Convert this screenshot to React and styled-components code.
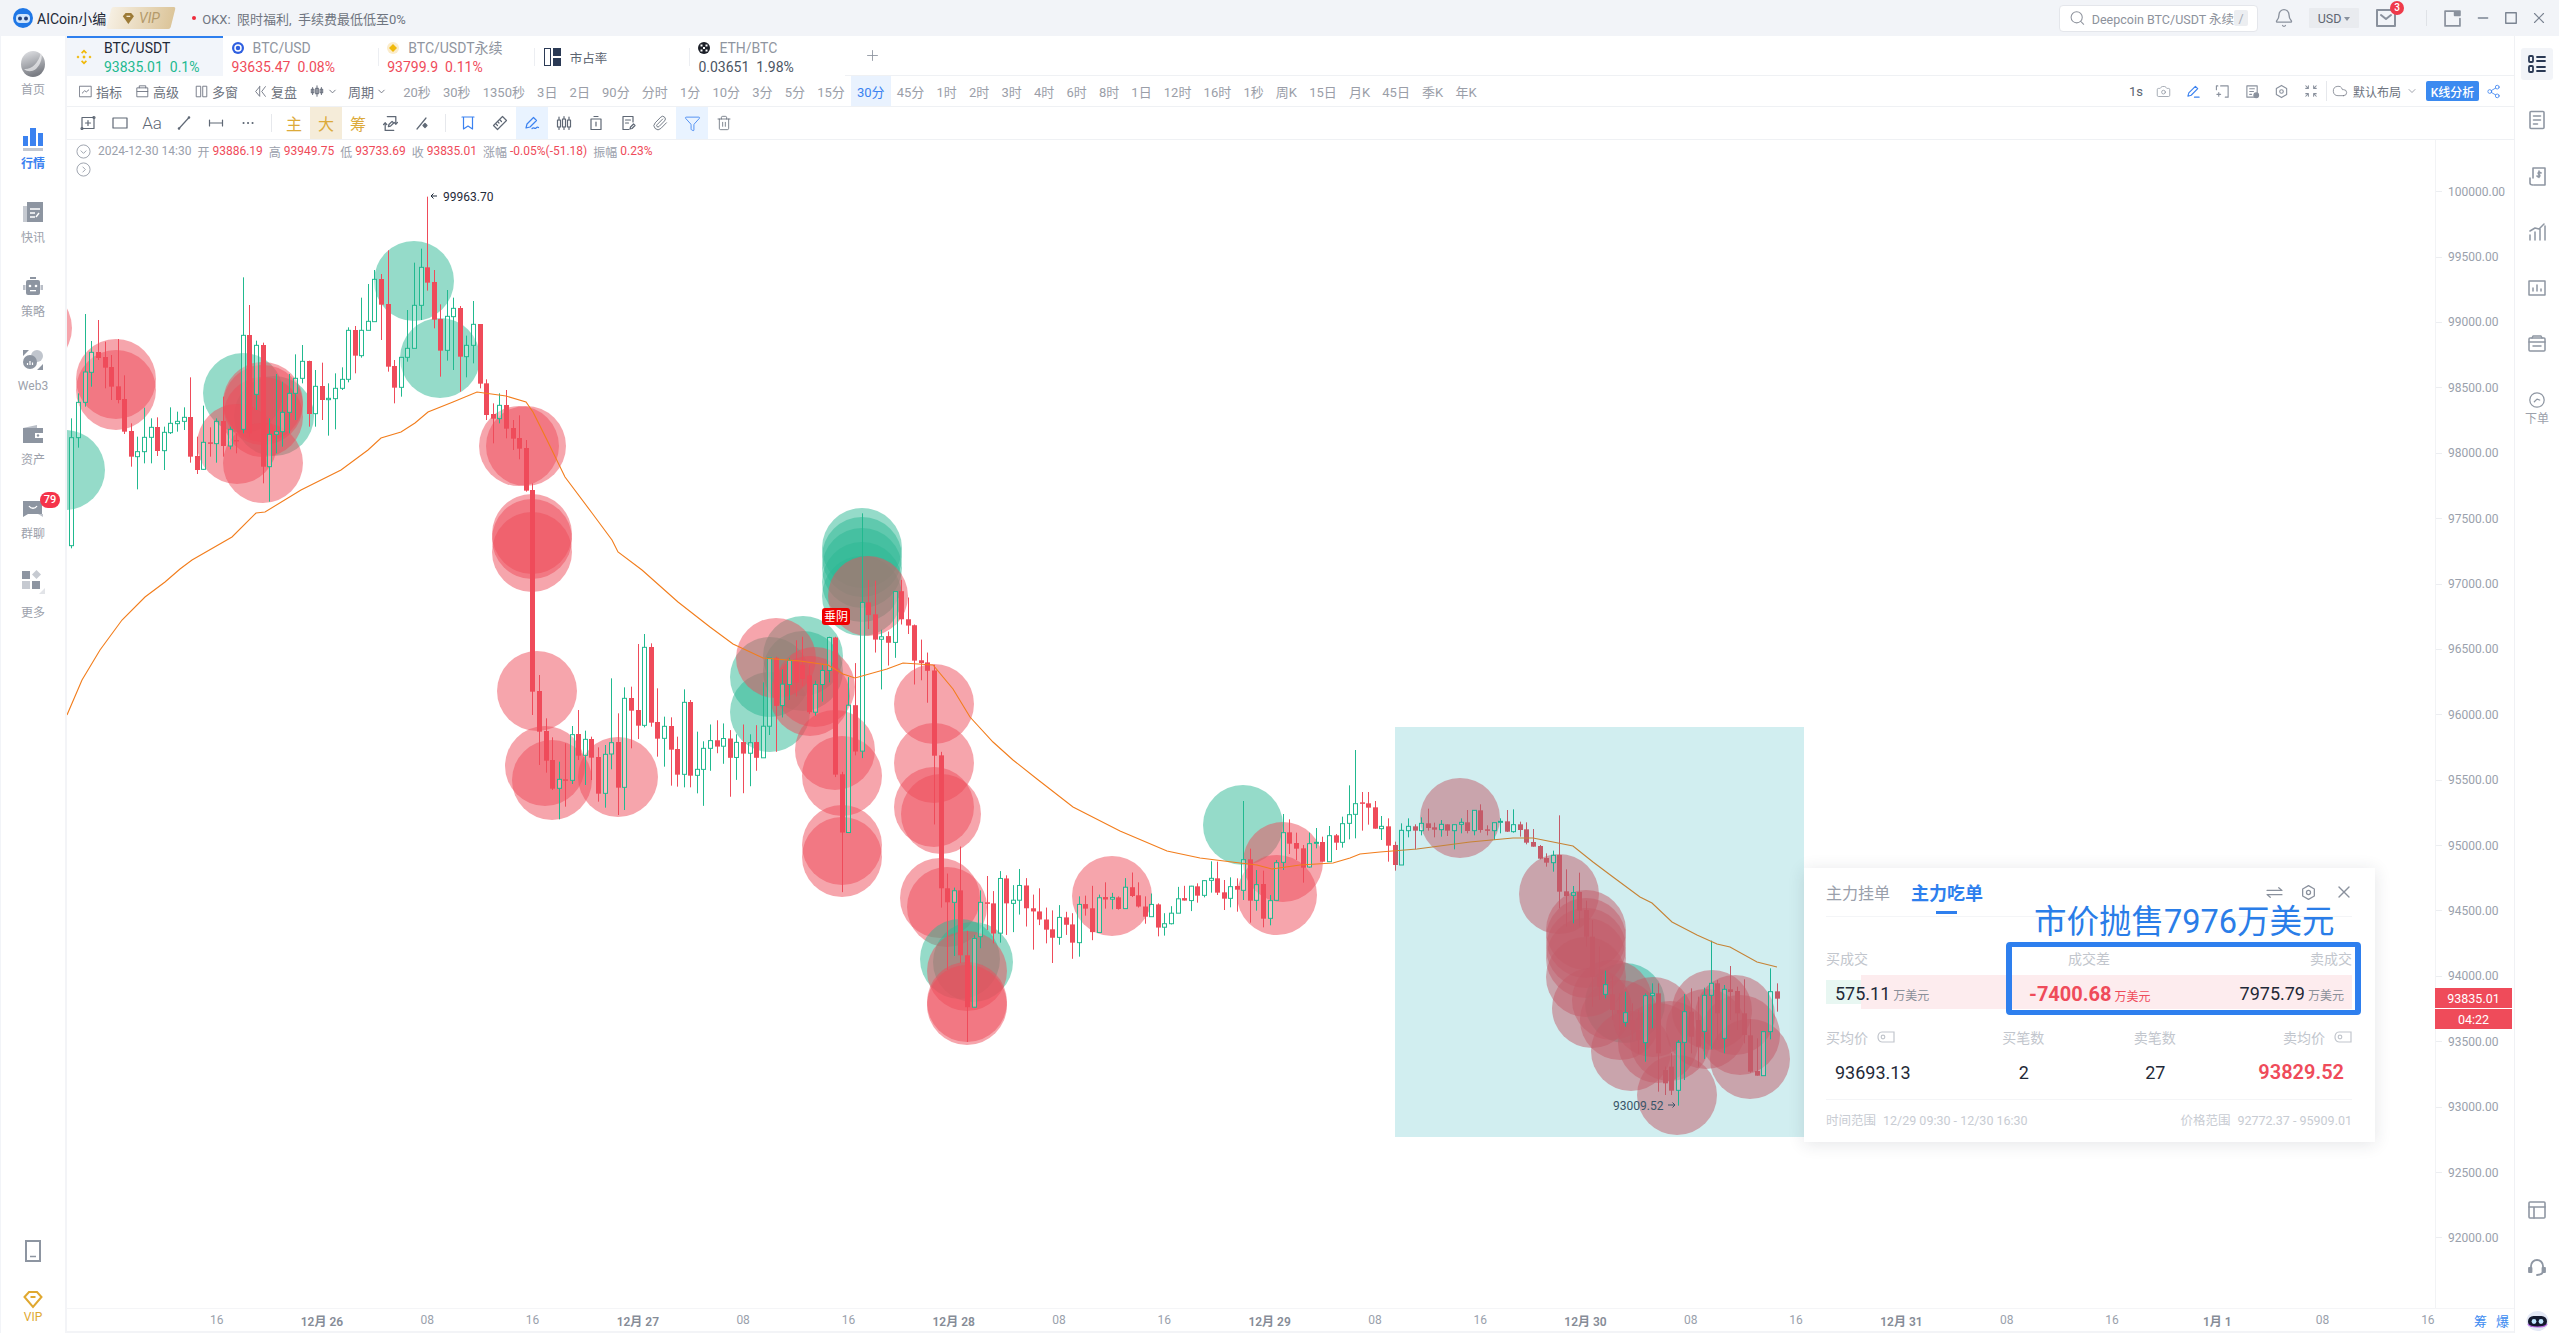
import React from 'react'
import styled, { createGlobalStyle } from 'styled-components'
import { Search, Bell, ChevronDown, Camera, Paperclip, Trash2, Filter, Share2, Plus, X, Minus, Cloud } from 'lucide-react'

const RED = '#ef4b5a'
const GREEN = '#21b98f'
const BLUE = '#2e7fee'

const GlobalStyle = createGlobalStyle`
  html, body { margin: 0; padding: 0; background: #fff; overflow: hidden; }
  body { font-family: Roboto, "Noto Sans CJK SC", sans-serif; color: #1f2937; }
  * { box-sizing: border-box; }
`

/* ---------- chart data, transcribed per screen region ---------- */
const seg = (ox, oy, sx, sy, rows) => rows.map(([x, up, wt, bt, bb, wb]) => ({
  x: Math.round(ox + x / sx), up, wt: oy + wt / sy, bt: oy + bt / sy, bb: oy + bb / sy, wb: oy + wb / sy,
}))

const candles = [
  ...seg(60, 170, 2.24, 3, [
    [25,1,745,803,1127,1135],[41,1,670,697,803,833],[55,1,432,606,697,710],[70,1,513,547,607,650],[85,0,450,546,564,570],
    [100,0,515,561,593,655],[115,0,555,591,650,690],[129,0,507,649,690,700],[144,0,616,687,785,792],[159,0,760,783,860,890],
    [173,1,800,845,860,958],[189,1,713,802,845,880],[203,1,745,772,802,880],[218,0,742,771,843,858],[232,1,770,787,842,900],
    [247,1,712,760,788,792],[262,1,725,754,761,785],[277,1,712,742,754,780],[292,0,622,741,860,878],[306,0,800,858,900,912],
    [321,1,707,817,898,900],[336,0,772,817,821,860],[350,1,745,754,821,878],[365,0,680,753,828,860],[380,1,770,778,828,838],
    [394,0,790,810,814,850],[409,1,322,496,778,790],[424,0,405,495,790,800],[439,1,512,526,673,720],[454,0,518,525,890,940],
    [469,1,745,793,890,995],[483,1,612,785,793,850],[498,1,635,727,785,830],[513,1,612,670,727,790],[527,1,553,625,670,750],
    [542,1,525,574,625,640],[557,0,572,573,732,770],[572,1,600,649,731,770],[587,0,578,648,690,750],[601,1,640,685,689,797],
    [616,1,610,655,686,778],[631,1,592,628,655,660],[646,1,472,481,628,637],[660,0,468,480,557,610],[675,1,383,481,557,563],
    [690,1,342,454,481,481],[704,1,300,328,455,455],[719,0,312,327,404,510],[734,0,241,402,590,605],[749,0,570,588,653,700],
    [764,1,562,562,652,680],[778,1,420,535,562,575],[793,1,278,406,535,535],[808,1,236,292,406,450],[823,0,80,292,338,362],
    [837,0,300,336,449,475],[852,0,403,447,542,620],[866,1,360,439,541,572],[881,1,383,415,440,600],[896,0,408,414,560,665],
    [910,1,497,526,560,622],[926,1,393,463,526,580],[940,0,462,462,641,655],[955,0,628,640,735,750],[970,0,700,732,746,820],
    [984,1,670,706,746,760],[999,0,660,705,776,805],[1014,0,750,774,806,840],[1029,0,736,804,836,868],[1043,0,810,834,962,965],
  ]),
  ...seg(525, 440, 3, 3, [
    [22,0,130,150,755,825],[42,0,705,753,875,975],[62,0,835,873,962,998],[82,0,892,960,1046,1050],[101,1,965,1018,1045,1138],
    [121,0,910,1018,1022,1100],[141,1,858,884,1021,1032],[160,0,810,882,947,960],[180,1,872,898,946,1035],[199,0,890,897,953,1020],
    [219,0,922,951,1061,1085],[239,1,915,943,1060,1103],[259,1,715,908,942,988],[279,0,820,906,1043,1125],[298,1,742,775,1042,1110],
    [318,0,740,774,812,925],[338,0,612,810,857,897],[358,1,582,622,856,862],[378,0,610,621,848,860],[397,0,745,846,896,950],
    [417,1,830,859,895,980],[437,0,832,858,929,1037],[457,0,890,927,1004,1040],[476,1,748,787,1003,1042],[496,0,780,786,1007,1042],
    [516,1,875,988,1006,1060],
  ]),
  ...seg(700, 500, 3, 2.851, [
    [10,1,688,708,768,872],[30,1,640,686,708,772],[50,0,628,685,703,722],[70,1,637,680,702,752],[90,0,656,680,735,846],
    [109,1,668,691,734,798],[129,0,640,690,723,836],[149,1,668,692,722,816],[169,0,642,690,735,772],[188,1,520,645,735,735],
    [208,1,450,450,645,670],[228,0,447,450,587,718],[247,1,483,525,586,620],[267,1,450,457,526,570],[287,0,400,460,520,560],
    [307,0,390,470,510,530],[327,0,470,500,605,610],[346,1,515,526,605,615],[366,1,470,486,526,575],[386,1,390,392,486,520],
    [406,0,390,392,783,790],[425,0,775,782,948,1118],[445,1,505,585,948,948],[465,0,465,585,717,728],[485,1,38,292,716,736],
    [505,0,228,292,328,368],[524,0,230,326,398,435],[544,1,370,390,397,540],[564,0,375,388,407,472],[584,1,260,261,406,450],
    [604,0,228,260,340,355],[623,0,278,340,358,382],[643,0,355,357,458,526],[662,0,398,457,465,514],[682,0,435,463,487,578],
    [702,0,470,486,729,925],[722,0,718,728,1107,1162],[742,0,1065,1107,1147,1340],[761,1,1105,1114,1147,1300],[781,0,988,1113,1298,1320],
    [801,0,1228,1298,1446,1545],[821,1,1240,1250,1446,1446],[841,1,1113,1147,1245,1278],[860,0,1072,1147,1151,1226],[880,0,1115,1150,1236,1264],
    [899,1,1058,1079,1235,1262],[919,0,1070,1079,1150,1240],[939,1,1098,1141,1150,1232],[958,1,1052,1099,1141,1182],[978,0,1078,1099,1164,1216],
    [998,0,1125,1164,1173,1282],[1018,0,1107,1173,1196,1212],[1038,0,1162,1196,1225,1264],[1057,0,1170,1224,1248,1320],[1077,1,1155,1190,1247,1268],
    [1097,0,1174,1190,1211,1240],[1117,0,1178,1210,1262,1308],[1136,1,1130,1153,1262,1302],[1156,0,1128,1152,1165,1185],[1176,0,1100,1164,1232,1255],
    [1196,1,1125,1134,1233,1233],[1215,0,1090,1132,1139,1165],[1235,1,1120,1133,1138,1167],[1255,0,1130,1133,1166,1168],[1275,1,1078,1104,1165,1165],
    [1295,0,1062,1104,1129,1132],[1314,0,1090,1127,1159,1162],[1334,0,1130,1159,1188,1208],[1354,1,1122,1153,1188,1188],[1374,0,1150,1153,1219,1244],
    [1393,1,1178,1208,1218,1242],[1413,1,1158,1178,1208,1210],[1433,1,1103,1137,1178,1178],[1452,0,1100,1135,1142,1142],[1472,1,1100,1101,1142,1172],
  ]),
  ...seg(1190, 740, 3, 3, [
    [22,0,430,439,467,488],[42,1,420,422,466,472],[62,1,364,415,421,458],[81,0,365,415,458,465],[101,0,420,457,476,510],
    [121,1,412,440,475,502],[140,0,415,438,449,515],[160,1,183,359,451,480],[180,0,326,358,482,548],[199,1,390,434,481,512],
    [219,0,392,432,536,562],[239,1,465,482,535,556],[259,1,360,368,481,481],[278,1,222,278,367,390],[298,0,238,277,311,342],
    [318,0,278,309,326,360],[338,0,315,325,383,428],[358,1,278,311,381,383],[377,1,264,307,310,325],[397,0,290,306,365,365],
    [417,1,258,287,365,365],[437,0,282,286,308,330],[457,1,230,251,307,323],[476,1,136,224,250,298],[496,1,30,191,223,295],
    [516,0,156,187,190,272],[535,0,156,190,203,254],[555,0,183,202,266,266],
  ]),
  ...seg(1380, 720, 3, 3, [
    [4,1,288,319,326,360],[25,0,295,319,377,425],[45,0,365,375,435,452],[64,1,310,331,435,435],[84,1,295,319,332,352],
    [104,0,313,319,332,388],[123,1,292,310,332,346],[143,0,266,310,324,332],[163,0,308,322,329,352],[182,1,300,313,329,350],
    [202,0,313,313,332,348],[222,1,313,314,332,388],[242,1,295,307,313,340],[262,0,270,307,333,340],[281,1,270,271,332,346],
    [301,0,253,271,330,338],[321,0,316,328,332,346],[341,1,308,308,332,360],[360,1,295,304,307,340],[380,0,270,304,335,336],
    [400,1,268,314,335,338],[420,0,305,313,330,350],[439,0,307,328,368,373],[459,0,327,366,380,380],[479,0,375,378,416,418],
    [498,0,400,414,428,440],[518,1,392,406,428,455],[538,0,286,405,515,565],[558,0,448,514,528,620],[578,1,498,518,526,610],
    [598,0,458,516,572,620],[617,0,542,570,650,680],[637,0,600,650,770,860],[657,0,680,770,800,840],[676,1,752,794,823,835],
    [696,0,770,823,870,900],[716,0,820,870,880,930],[736,1,815,878,907,920],[756,0,850,900,930,960],[775,0,870,930,960,1000],
    [795,1,820,827,968,1025],[815,1,790,820,827,925],[835,0,790,820,1000,1115],[854,0,1040,1050,1090,1125],[874,0,1000,1040,1112,1125],
    [893,1,960,967,1111,1157],[913,1,822,875,967,1080],[933,0,805,875,950,1000],[953,0,830,900,980,1040],[973,1,803,826,934,1017],
    [992,1,662,790,826,988],[1012,0,780,790,880,960],[1032,1,795,808,955,1000],[1051,0,738,808,816,900],[1071,0,800,813,880,930],
    [1091,0,778,880,945,970],[1111,0,898,946,1055,1058],[1130,0,955,1053,1067,1067],[1150,1,935,935,1067,1067],[1170,1,745,815,935,958],
    [1190,0,790,814,836,875],
  ]),
]

// [cx, cy, buy?]
const bubbles = [
  [32,328,0],[65,470,1],[116,379,0],[116,390,0],[243,393,1],[274,416,1],[263,402,0],[263,405,0],[263,417,0],[237,444,0],[263,463,0],
  [414,281,1],[440,358,1],[519,446,0],[526,446,0],[532,534,0],[532,539,0],[532,552,0],[537,691,0],[545,766,0],[552,780,0],[618,777,0],
  [862,548,1],[862,557,1],[862,568,1],[862,582,1],[862,596,1],[868,596,0],
  [770,677,1],[770,712,1],[803,656,1],[803,671,1],[776,658,0],[815,687,0],[810,696,0],[835,750,0],[842,776,0],[842,845,0],[842,857,0],
  [934,704,0],[934,763,0],[934,807,0],[941,814,0],[940,898,0],[947,907,0],
  [960,959,1],[973,962,1],[967,971,0],[967,1002,0],[967,1005,0],[1112,896,0],
  [1243,825,1],[1283,862,0],[1277,895,0],
  [1460,818,0],[1559,894,0],[1625,1003,1],[1586,930,0],[1586,938,0],[1586,948,0],[1586,958,0],[1586,977,0],[1592,1008,0],
  [1612,1000,0],[1620,1020,0],[1631,1051,0],[1658,1043,0],[1653,1017,0],[1670,1041,0],[1677,1095,0],
  [1712,1010,0],[1735,1015,0],[1706,1029,0],[1740,1035,0],[1750,1059,0],
]

const maLine = [
  [67,715],[82,680],[100,650],[122,620],[145,597],[165,582],[180,569],[192,560],[232,537],[256,513],[265,512],[301,490],[341,470],[368,450],
  [381,438],[401,432],[415,423],[428,412],[453,402],[477,392],[506,396],[526,402],[533,412],[547,440],[565,477],[592,513],[612,540],[618,552],
  [642,570],[678,602],[710,627],[733,644],[763,658],[800,661],[828,665],[843,674],[855,678],[887,669],[903,663],[933,665],[953,689],[970,717],
  [993,742],[1013,760],[1037,779],[1073,807],[1120,831],[1167,851],[1200,858],[1240,863],[1257,865],[1272,869],[1300,865],[1333,863],[1350,858],
  [1360,854],[1380,852],[1417,849],[1470,842],[1513,838],[1533,838],[1573,846],[1593,862],[1613,877],[1640,897],[1652,903],[1672,922],[1697,935],
  [1717,944],[1730,947],[1757,962],[1777,967],
]

const priceTicks = Array.from({ length: 17 }, (_, i) => (100000 - i * 500).toFixed(2))
const timeTicks = ['16','12月 26','08','16','12月 27','08','16','12月 28','08','16','12月 29','08','16','12月 30','08','16','12月 31','08','16','1月 1','08','16']
const periods = ['20秒','30秒','1350秒','3日','2日','90分','分时','1分','10分','3分','5分','15分','30分','45分','1时','2时','3时','4时','6时','8时','1日','12时','16时','1秒','周K','15日','月K','45日','季K','年K']

/* ---------- page frame ---------- */
const Page = styled.div`
  width: 2559px;
  height: 1333px;
  display: flex;
  flex-direction: column;
  background: #fff;
  font-size: 13px;
`
const Body = styled.div`
  flex: 1;
  min-height: 0;
  display: flex;
`

/* ---------- title bar ---------- */
const TitleBar = styled.header`
  height: 36px;
  flex: none;
  display: flex;
  align-items: center;
  padding-left: 13px;
  background: #f2f4f8;
`
const Brand = styled.span`
  margin-left: 4px;
  font-size: 14px;
  color: #1f2937;
  white-space: nowrap;
`
const VipBadge = styled.span`
  margin-left: 3px;
  width: 64px;
  height: 22px;
  flex: none;
  display: flex;
  align-items: center;
  gap: 4px;
  padding-left: 13px;
  transform: skewX(-14deg);
  background: linear-gradient(90deg, #f6efe2, #dcc59a);
  border-radius: 2px;
  color: #b49a6a;
  font-size: 14px;
  i { transform: skewX(14deg); display: flex; font-style: italic; }
`
const Notice = styled.span`
  margin-left: 19px;
  display: flex;
  align-items: center;
  gap: 6px;
  color: #6f7580;
  font-size: 13px;
  white-space: pre;
  &::before { content: ''; width: 4px; height: 4px; border-radius: 50%; background: #ef2b3c; }
`
const TitleRight = styled.div`
  margin-left: auto;
  display: flex;
  align-items: center;
  color: #8a919d;
`
const SearchBox = styled.div`
  width: 199px;
  height: 27px;
  margin-left: 1px;
  display: flex;
  align-items: center;
  padding: 0 9px 0 9px;
  background: #fff;
  border: 1px solid #e4e6eb;
  border-radius: 4px;
  font-size: 12.5px;
  color: #8d929c;
  white-space: nowrap;
  span { margin-left: 6px; flex: 1; }
  kbd {
    width: 15px;
    height: 16px;
    display: grid;
    place-items: center;
    background: #eceef1;
    border-radius: 2px;
    font: inherit;
    color: #a7acb5;
  }
`
const BellSlot = styled.div`
  margin-left: 16px;
  display: flex;
`
const UsdBox = styled.div`
  width: 50px;
  height: 20px;
  margin-left: 15px;
  display: flex;
  align-items: center;
  justify-content: center;
  gap: 3px;
  background: #e9ebef;
  border-radius: 1px;
  font-size: 12.5px;
  color: #5e6672;
  &::after { content: ''; border: 3.5px solid transparent; border-top: 4px solid #8a919d; margin-top: 4px; }
`
const MailWrap = styled.div`
  position: relative;
  margin-left: 17px;
  display: flex;
`
const MailCount = styled.b`
  position: absolute;
  top: -7px;
  right: -8px;
  width: 14px;
  height: 14px;
  border-radius: 50%;
  background: #ef3a4a;
  color: #fff;
  font-size: 10px;
  font-weight: 500;
  line-height: 14px;
  text-align: center;
`
const TitleSep = styled.i`
  width: 1px;
  height: 16px;
  margin: 0 17px 0 30px;
  background: #dfe2e7;
`
const WinButton = styled.div`
  width: 28px;
  height: 36px;
  margin-left: ${({ $ml }) => $ml || 0}px;
  margin-right: ${({ $mr }) => $mr || 0}px;
  display: grid;
  place-items: center;
  color: #7b8492;
`

/* ---------- left nav ---------- */
const SideNav = styled.nav`
  width: 67px;
  flex: none;
  display: flex;
  flex-direction: column;
  align-items: stretch;
  padding: 4px 0 8px;
  border-right: 2px solid #f3f4f7;
  border-left: 1px solid #f2f4f8;
`
const NavItem = styled.div`
  position: relative;
  height: 74px;
  flex: none;
  display: flex;
  flex-direction: column;
  align-items: center;
  padding-top: 9px;
  gap: ${({ $gap }) => $gap || 3}px;
  font-size: 12px;
  line-height: 16px;
  color: ${({ $active }) => ($active ? '#3b82f0' : '#9ca1ab')};
  font-weight: ${({ $active }) => ($active ? 600 : 400)};
  svg { display: block; }
`
const NavIconBox = styled.div`
  height: 30px;
  display: grid;
  place-items: center;
`
const NavBadge = styled.b`
  position: absolute;
  top: 8px;
  right: 5px;
  width: 20px;
  height: 16px;
  border-radius: 8px;
  background: #f5334a;
  color: #fff;
  font-size: 11px;
  font-weight: 500;
  line-height: 16px;
  text-align: center;
`
const NavBottom = styled.div`
  margin-top: auto;
  display: flex;
  flex-direction: column;
  align-items: center;
  font-size: 12px;
  line-height: 16px;
  color: #e0a830;
  gap: 29px;
  div { display: flex; flex-direction: column; align-items: center; }
`

/* ---------- main column ---------- */
const MainCol = styled.main`
  flex: 1;
  min-width: 0;
  display: flex;
  flex-direction: column;
`
const TabRow = styled.div`
  height: 40px;
  flex: none;
  display: flex;
`
const Tab = styled.div`
  position: relative;
  width: 155.6px;
  flex: none;
  display: flex;
  align-items: center;
  gap: ${({ $active }) => ($active ? '11px' : '0')};
  padding-left: ${({ $active }) => ($active ? '8px' : '9px')};
  background: ${({ $active }) => ($active ? '#f2f5fa' : '#fff')};
  border-top: 2px solid ${({ $active }) => ($active ? BLUE : 'transparent')};
  &::before {
    content: '';
    display: ${({ $active, $first }) => ($active || $first ? 'none' : 'block')};
    position: absolute;
    left: 0;
    top: 10px;
    height: 18px;
    width: 1px;
    background: #eceef2;
  }
`
const TabText = styled.div`
  display: flex;
  flex-direction: column;
  gap: 1px;
  line-height: 18px;
`
const TabName = styled.div`
  display: flex;
  align-items: center;
  gap: 9px;
  font-size: 14px;
  color: ${({ $active }) => ($active ? '#1f2937' : '#8f95a0')};
  white-space: nowrap;
`
const TabPrice = styled.div`
  display: flex;
  gap: 7px;
  font-size: 14px;
  white-space: nowrap;
  color: ${({ $tone }) => ($tone === 'up' ? GREEN : $tone === 'down' ? RED : '#4b5563')};
`
const ShareLabel = styled.div`
  display: flex;
  align-items: center;
  gap: 9px;
  margin-left: 1px;
  font-size: 12.5px;
  color: #5b6370;
`
const AddCell = styled.div`
  flex: 1;
  display: flex;
  align-items: center;
  padding-left: 19px;
  border-bottom: 1px solid #eff1f4;
  color: #8a919d;
`
const BarOne = styled.div`
  height: 31px;
  flex: none;
  display: flex;
  align-items: stretch;
  padding-left: 12px;
  border-bottom: 1px solid #eff1f4;
`
const ToolLabel = styled.div`
  display: flex;
  align-items: center;
  gap: ${({ $gap }) => $gap || 4}px;
  margin-right: ${({ $right }) => $right ?? 14}px;
  font-size: 13px;
  color: #6d7380;
  white-space: nowrap;
`
const Period = styled.div`
  display: flex;
  align-items: center;
  padding: 0 6.08px;
  font-size: 13px;
  white-space: nowrap;
  color: ${({ $active }) => ($active ? '#3b82f0' : '#9a9ea8')};
  background: ${({ $active }) => ($active ? '#e9f2fe' : 'transparent')};
`
const BarRight = styled.div`
  margin-left: auto;
  display: flex;
  align-items: center;
  padding-right: 13px;
  color: #8a919d;
`
const TickIcon = styled.div`
  width: ${({ $w }) => $w || 29.5}px;
  display: grid;
  place-items: center;
  color: ${({ $blue }) => ($blue ? '#3b82f0' : 'inherit')};
`
const OneS = styled.span`
  margin-right: 6px;
  font-size: 13px;
  color: #5b6370;
`
const BarDivider = styled.i`
  width: 1px;
  height: 20px;
  margin: 0 5px 0 0;
  background: #e6e8ec;
`
const LayoutLabel = styled.div`
  display: flex;
  align-items: center;
  gap: 5px;
  font-size: 12px;
  color: #6d7380;
  white-space: nowrap;
`
const KButton = styled.div`
  width: 53px;
  height: 20px;
  margin: 0 6px 0 8px;
  display: grid;
  place-items: center;
  border-radius: 2px;
  background: #3b8af0;
  color: #fff;
  font-size: 12px;
  font-weight: 500;
  white-space: nowrap;
`
const BarTwo = styled.div`
  height: 33px;
  flex: none;
  display: flex;
  padding-left: 5px;
  border-bottom: 1px solid #eff1f4;
`
const DrawCell = styled.div`
  width: 32px;
  display: grid;
  place-items: center;
  font-size: ${({ $text }) => ($text ? '16px' : '13px')};
  color: ${({ $text, $blue }) => ($text ? '#dcaa3a' : $blue ? '#3b82f0' : '#5f6875')};
  background: ${({ $on }) => ($on === 'gold' ? '#f5ecd9' : $on === 'blue' ? '#e9f3ff' : 'transparent')};
`
const AaGlyph = styled.span`
  font-size: 17px;
  font-weight: 300;
`
const DrawSep = styled.i`
  width: 14px;
  display: flex;
  align-items: center;
  justify-content: center;
  &::after { content: ''; width: 1px; height: 18px; background: #e6e8ec; }
`

/* ---------- chart ---------- */
const ChartRow = styled.div`
  flex: 1;
  min-height: 0;
  display: flex;
`
const Plot = styled.div`
  position: relative;
  width: 2368px;
  flex: none;
  overflow: visible;
`
const PlotSvg = styled.svg`
  display: block;
`
const OhlcLine = styled.div`
  position: absolute;
  left: 9px;
  top: 2px;
  display: flex;
  align-items: center;
  height: 18px;
  font-size: 12px;
  color: #9aa0ab;
  white-space: nowrap;
  span { margin-right: 3px; }
  b { font-weight: 400; color: ${RED}; margin-right: 6px; }
`
const OhlcDate = styled.span`
  && { margin-right: 6px; }
`
const RoundMark = styled.svg`
  margin-right: 7px;
  color: #9aa0ab;
`
const SecondMark = styled(RoundMark)`
  position: absolute;
  left: 9px;
  top: 22px;
`
const PriceAxis = styled.div`
  position: relative;
  width: 79px;
  flex: none;
  padding-top: 19px;
  border-left: 1px solid #f2f3f5;
`
const PriceTick = styled.div`
  position: relative;
  height: 65.4px;
  display: flex;
  align-items: center;
  padding-left: 12px;
  font-size: 12px;
  color: #9aa1ac;
  &::before {
    content: '';
    position: absolute;
    left: 0;
    width: 6px;
    height: 1px;
    background: #eceef1;
  }
`
const PriceTag = styled.div`
  position: absolute;
  left: -1px;
  width: 77px;
  height: 20px;
  top: ${({ $top }) => $top}px;
  display: grid;
  place-items: center;
  background: ${RED};
  color: #fff;
  font-size: 12.5px;
`
const TimeAxis = styled.div`
  height: 25px;
  flex: none;
  display: flex;
  align-items: center;
  padding-left: 97px;
  border-top: 1px solid #f4f5f7;
  border-bottom: 2px solid #f3f4f7;
  position: relative;
`
const TimeTick = styled.div`
  width: 105.3px;
  flex: none;
  text-align: center;
  font-size: 12px;
  color: ${({ $date }) => ($date ? '#868c97' : '#9aa1ac')};
  font-weight: ${({ $date }) => ($date ? 600 : 400)};
`
const AxisLinks = styled.div`
  position: absolute;
  right: 5px;
  display: flex;
  gap: 9px;
  font-size: 13px;
  color: #3b8af0;
`

/* ---------- order-flow panel ---------- */
const Panel = styled.section`
  position: absolute;
  left: 1737px;
  top: 728px;
  width: 571px;
  height: 274px;
  padding: 0 23px 0 22px;
  background: #fff;
  box-shadow: 0 2px 16px rgba(30, 40, 60, 0.12);
`
const PanelHead = styled.div`
  height: 49px;
  display: flex;
  align-items: center;
  gap: 21px;
  border-bottom: 1px solid #f4f5f7;
`
const PanelTab = styled.div`
  position: relative;
  font-size: ${({ $active }) => ($active ? '18px' : '16px')};
  font-weight: ${({ $active }) => ($active ? 700 : 400)};
  color: ${({ $active }) => ($active ? '#2e7fee' : '#9aa0ab')};
  &::after {
    content: '';
    display: ${({ $active }) => ($active ? 'block' : 'none')};
    position: absolute;
    left: 25px;
    bottom: -9px;
    width: 21px;
    height: 3px;
    background: #2e7fee;
  }
`
const PanelTools = styled.div`
  margin-left: auto;
  display: flex;
  align-items: center;
  gap: 17px;
  margin-right: -2px;
  color: #8a919d;
`
const SmallLabels = styled.div`
  display: grid;
  grid-template-columns: 242px 1fr auto;
  margin-top: 32px;
  height: 20px;
  line-height: 20px;
  font-size: 14px;
  color: #c2c6cd;
`
const Track = styled.div`
  position: relative;
  height: 34px;
  margin-top: 6px;
  display: grid;
  grid-template-columns: 194px 1fr auto;
  align-items: center;
  padding: 3px 8px 0 9px;
  background: linear-gradient(90deg, transparent 35px, #fdecee 35px);
`
const TrackGreen = styled.i`
  position: absolute;
  left: 0;
  top: 5px;
  width: 35px;
  height: 24px;
  background: #e8f7f2;
`
const Amount = styled.div`
  position: relative;
  display: flex;
  align-items: baseline;
  gap: 3px;
  font-size: ${({ $bold }) => ($bold ? '20px' : '18px')};
  font-weight: ${({ $bold }) => ($bold ? 700 : 400)};
  color: ${({ $red }) => ($red ? RED : '#1f2937')};
  small { font-size: 12px; font-weight: 400; color: ${({ $red }) => ($red ? RED : '#8a8f99')}; }
`
const StatGrid = styled.div`
  display: grid;
  grid-template-columns: repeat(4, 1fr);
  align-items: center;
  margin-top: ${({ $top }) => $top}px;
  height: ${({ $h }) => $h}px;
`
const StatLabel = styled.div`
  display: flex;
  align-items: center;
  gap: 9px;
  justify-content: ${({ $align }) => $align};
  font-size: 14px;
  color: #c2c6cd;
`
const StatValue = styled.div`
  font-size: ${({ $bold }) => ($bold ? '20px' : '18px')};
  font-weight: ${({ $bold }) => ($bold ? 600 : 400)};
  color: ${({ $bold }) => ($bold ? RED : '#1f2937')};
  text-align: ${({ $align }) => $align};
  padding: 0 8px 0 9px;
`
const PanelFoot = styled.div`
  margin-top: 15px;
  padding-top: 11px;
  display: flex;
  justify-content: space-between;
  border-top: 1px solid #f4f5f7;
  font-size: 12.5px;
  line-height: 20px;
  color: #c8ccd3;
  span + span { margin-left: 7px; }
`
const Callout = styled.div`
  position: absolute;
  left: 230px;
  top: 34px;
  font-size: 32.5px;
  line-height: 40px;
  color: #2a7de8;
  white-space: nowrap;
`
const CalloutBox = styled.div`
  position: absolute;
  left: 202px;
  top: 74px;
  width: 355px;
  height: 73px;
  border: solid #2e7fee;
  border-width: 5px 6px;
  border-radius: 4px;
`

/* ---------- right rail ---------- */
const RightRail = styled.aside`
  width: 45px;
  flex: none;
  display: flex;
  flex-direction: column;
  align-items: center;
  padding: 12px 0 0;
  border-left: 1px solid #f0f1f4;
  color: #8f97a3;
`
const RailItem = styled.div`
  width: 32px;
  height: 32px;
  margin-bottom: 24px;
  flex: none;
  display: flex;
  flex-direction: column;
  align-items: center;
  justify-content: center;
  border-radius: 3px;
  color: ${({ $active }) => ($active ? '#2b3a55' : '#8f97a3')};
  background: ${({ $active }) => ($active ? '#f2f4f8' : 'transparent')};
`
const RailOrder = styled(RailItem)`
  height: 46px;
  justify-content: flex-start;
  padding-top: 7px;
  gap: 3px;
  font-size: 12px;
  line-height: 14px;
  span { color: #9ca1ab; white-space: nowrap; }
`
const RailBottom = styled.div`
  margin-top: auto;
  display: flex;
  flex-direction: column;
  align-items: center;
  gap: 35px;
  padding-bottom: 1px;
  > :first-child { margin-bottom: 4px; }
`

/* ---------- drawings ---------- */
const Line = ({ size = 16, children, w = 1.2, color = 'currentColor', box = 16 }) => (
  <svg width={size} height={size} viewBox={`0 0 ${box} ${box}`} fill='none' stroke={color} strokeWidth={w} strokeLinecap='round' strokeLinejoin='round'>{children}</svg>
)

const Avatar = () => (
  <svg width='20' height='20' viewBox='0 0 20 20'>
    <circle cx='10' cy='10' r='10' fill='#1f77e6' />
    <rect x='3' y='6' width='14' height='9' rx='4' fill='#cfe4fb' />
    <circle cx='7' cy='10.5' r='2' fill='#24407a' />
    <circle cx='13' cy='10.5' r='2' fill='#24407a' />
  </svg>
)
const Gem = ({ color = '#9c7a36', size = 13 }) => (
  <svg width={size} height={size} viewBox='0 0 14 14'>
    <path d='M1 4.5 4 1h6l3 3.5L7 13z' fill={color} />
    <rect x='5' y='4' width='4' height='1.4' fill='#f2e7cf' />
  </svg>
)
const BinanceMark = ({ size = 18 }) => (
  <svg width={size} height={size} viewBox='0 0 18 18' fill='#f0b90b'>
    <path d='M9 1.5 12 4.500 10.800 5.700 9 3.900 7.200 5.700 6 4.500z' />
    <path d='M9 16.500 6 13.500 7.200 12.300 9 14.100 10.800 12.300 12 13.500z' />
    <path d='M1.500 9 3 7.500 4.500 9 3 10.500zM13.500 9 15 7.500 16.500 9 15 10.500z' />
    <path d='M9 7.300 10.700 9 9 10.700 7.300 9z' />
  </svg>
)
const PerpMark = () => (
  <svg width='12' height='12' viewBox='0 0 12 12'>
    <circle cx='6' cy='6' r='6' fill='#fbeccb' />
    <path d='M6 2 10 6 6 10 2 6z' fill='#f0b90b' />
  </svg>
)
const RingMark = () => (
  <svg width='12' height='12' viewBox='0 0 12 12'>
    <circle cx='6' cy='6' r='6' fill='#2f5fe0' />
    <circle cx='6' cy='6' r='3' fill='none' stroke='#fff' strokeWidth='1.5' />
  </svg>
)
const OkMark = () => (
  <svg width='12' height='12' viewBox='0 0 12 12'>
    <circle cx='6' cy='6' r='6' fill='#1b1f27' />
    <g fill='#fff'>
      <rect x='2.500' y='2.500' width='2' height='2' /><rect x='7.500' y='2.500' width='2' height='2' />
      <rect x='5' y='5' width='2' height='2' />
      <rect x='2.500' y='7.500' width='2' height='2' /><rect x='7.500' y='7.500' width='2' height='2' />
    </g>
  </svg>
)
const ShareMark = () => (
  <svg width='17' height='18' viewBox='0 0 17 18'>
    <rect x='.5' y='.5' width='6' height='17' fill='#fff' stroke='#2b3a55' />
    <rect x='9' y='0' width='8' height='8' fill='#2b3a55' />
    <rect x='9' y='10' width='8' height='8' fill='#2b3a55' />
  </svg>
)

const HomeGlobe = () => (
  <svg width='24' height='30' viewBox='0 0 24 30'>
    <defs>
      <linearGradient id='globe' x1='0' y1='0' x2='0.3' y2='1'>
        <stop offset='0' stopColor='#e4e5e8' />
        <stop offset='1' stopColor='#7a7d84' />
      </linearGradient>
    </defs>
    <ellipse cx='12' cy='15' rx='12' ry='13' fill='url(#globe)' />
    <path d='M3 20C9 21 18 15 20 3c2 5 0 12-5 17-4 3-9 3-12 0z' fill='#f6f6f7' opacity='.65' />
  </svg>
)
const BarsIcon = () => (
  <svg width='20' height='26' viewBox='0 0 20 26'>
    <rect x='0' y='11' width='5' height='10' fill='#3b82f0' />
    <rect x='7' y='3' width='6' height='18' fill='#3b82f0' />
    <rect x='15' y='8' width='5' height='13' fill='#3b82f0' />
    <rect x='0' y='23' width='20' height='3' fill='#c3c8d1' />
  </svg>
)
const NewsIcon = () => (
  <svg width='20' height='20' viewBox='0 0 20 20'>
    <rect x='0' y='4' width='6' height='16' fill='#c6cad1' />
    <rect x='4' y='0' width='16' height='20' fill='#8d95a1' />
    <path d='M7 7h10M7 11h5M7 15h5' stroke='#fff' strokeWidth='1.4' />
    <path d='M13 15l3-4' stroke='#fff' strokeWidth='1.4' />
  </svg>
)
const RobotIcon = () => (
  <svg width='20' height='18' viewBox='0 0 20 18'>
    <rect x='3' y='3' width='14' height='15' rx='2' fill='#8d95a1' />
    <rect x='0' y='8' width='2.500' height='5' fill='#b9bec7' />
    <rect x='17.500' y='8' width='2.500' height='5' fill='#b9bec7' />
    <rect x='7' y='0' width='6' height='2' fill='#8d95a1' />
    <circle cx='7' cy='9' r='1.300' fill='#fff' />
    <circle cx='13' cy='9' r='1.300' fill='#fff' />
    <rect x='7' y='13' width='6' height='1.300' fill='#fff' />
  </svg>
)
const Web3Icon = () => (
  <svg width='20' height='20' viewBox='0 0 20 20'>
    <path d='M0 0h6L0 6zM20 20h-6l6-6z' fill='#8d95a1' />
    <circle cx='14' cy='6' r='6' fill='#c0c5cd' />
    <circle cx='7' cy='12' r='7' fill='#8d95a1' />
    <path d='M4.500 13v2M7 11v4M9.500 12.500V15' stroke='#fff' strokeWidth='1.200' />
  </svg>
)
const WalletIcon = () => (
  <svg width='20' height='18' viewBox='0 0 20 18'>
    <path d='M0 3 14 0v3z' fill='#b9bec7' />
    <rect x='0' y='3' width='20' height='15' fill='#8d95a1' />
    <rect x='12' y='8' width='8' height='5' fill='#fff' />
    <circle cx='15' cy='10.500' r='1.200' fill='#8d95a1' />
  </svg>
)
const ChatIcon = () => (
  <svg width='20' height='18' viewBox='0 0 20 18'>
    <path d='M0 2h19v13H5l-5 3z' fill='#8d95a1' />
    <path d='M6 7c2 3 6 3 8 0' stroke='#fff' strokeWidth='1.300' fill='none' />
    <path d='M15 15h5v3z' fill='#c0c5cd' />
  </svg>
)
const MoreIcon = () => (
  <svg width='24' height='24' viewBox='0 0 24 24'>
    <rect x='1' y='1' width='8' height='8' fill='#8d95a1' />
    <path d='M15.500 0 20 4.500 15.500 9 11 4.500z' fill='#c6cad1' />
    <rect x='1' y='11' width='8' height='8' fill='#c6cad1' />
    <rect x='11' y='11' width='8' height='8' fill='#8d95a1' />
    <path d='M24 18v6h-6z' fill='#e2e4e8' />
  </svg>
)
const PhoneIcon = () => (
  <svg width='16' height='22' viewBox='0 0 16 22' fill='none' stroke='#8d95a1' strokeWidth='2'>
    <rect x='1' y='1' width='14' height='20' />
    <path d='M5 16.500h6' strokeWidth='1.500' />
  </svg>
)
const VipDiamond = () => (
  <svg width='20' height='18' viewBox='0 0 20 18' fill='none' stroke='#e0a830' strokeWidth='2'>
    <path d='M1.500 6 6 1h8l4.500 5L10 16z' />
    <path d='M7.500 6h5' />
  </svg>
)
const RoboHead = () => (
  <svg width='23' height='21' viewBox='0 0 23 21'>
    <ellipse cx='11.500' cy='10' rx='11' ry='10' fill='#e3e8f5' />
    <rect x='2' y='5' width='19' height='11' rx='5.500' fill='#12182e' />
    <path d='M2 13c2 4 17 4 19 0' stroke='#b463e0' strokeWidth='1.200' fill='none' />
    <circle cx='8' cy='10.500' r='2.400' fill='#bfe6ff' />
    <circle cx='15' cy='10.500' r='2.400' fill='#bfe6ff' />
  </svg>
)

const SmallToggle = () => (
  <svg width='18' height='12' viewBox='0 0 18 12' fill='none' stroke='#c2c6cd' strokeWidth='1.200'>
    <path d='M5 1h12v10H5C2 11 1 8 1 6s1-5 4-5z' />
    <circle cx='6' cy='6' r='1.800' />
  </svg>
)
const HexGear = ({ size = 16 }) => (
  <Line size={size}>
    <path d='M8 1.500 13.500 4.700v6.600L8 14.500 2.500 11.300V4.700z' />
    <circle cx='8' cy='8' r='1.900' />
  </Line>
)

const drawTools = [
  <Line key='a'><rect x='2' y='2.500' width='12' height='11' /><path d='M8 5.500v5M5.500 8h5' /><circle cx='14' cy='2.500' r='1' /><circle cx='2' cy='13.500' r='1' /></Line>,
  <Line key='b'><rect x='1' y='3' width='14' height='10' /></Line>,
  <AaGlyph key='c'>Aa</AaGlyph>,
  <Line key='d'><path d='M3 13.500 13 2.500' /><circle cx='13' cy='2.500' r='.7' /><circle cx='3' cy='13.500' r='.7' /></Line>,
  <Line key='e'><path d='M1.500 5v6M14.500 5v6M1.500 8h13' /></Line>,
  <Line key='f' w={2}><path d='M3.500 8h.1M8 8h.1M12.500 8h.1' /></Line>,
]
const drawToolsB = [
  <Line key='g' size={17}><path d='M5 1.500H13v7M11 14.500H3v-7' /><path d='M1.500 9 3 7.500 4.500 9M11.500 7 13 8.500 14.500 7' /><path d='M6 11l.5-2 3-3 1.500 1.500-3 3z' /></Line>,
  <Line key='h'><path d='M3 14 12 3' /><path d='M11 8.500l2 2-2 2-2-2z' fill='currentColor' /></Line>,
]
const drawToolsC = [
  { blue: true, el: <Line key='i'><path d='M2 2h12M3.500 2v12l4.500-3 4.500 3V2' /></Line> },
  { el: <Line key='j'><path d='M10.500 1.500 14.500 5.500 5.500 14.500 1.500 10.500z' /><path d='M8 5l1.500 1.500M6 7l1 1M4 9l1.500 1.500' /></Line> },
  { blue: true, on: 'blue', el: <Line key='k'><path d='M2 13l1-4 6.500-6.500 3 3L6 12zM8 13.500c2-2 2.500 1 4-.5s1.500-1 2.500-.5' /></Line> },
  { el: <Line key='l'><rect x='1.500' y='5' width='3' height='7' /><rect x='6.500' y='4' width='3' height='8' /><rect x='11.500' y='5' width='3' height='7' /><path d='M3 2v3M3 12v2.500M8 1.500V4M8 12v2.500M13 2v3M13 12v2.500' /></Line> },
  { el: <Line key='m'><rect x='3' y='4' width='10' height='10.500' /><path d='M6 1.500h4M8 7v4' /></Line> },
  { el: <Line key='n'><path d='M13 7V1.500H3v13h6' /><path d='M5.500 5h5M5.500 8h3' /><path d='M10 14l.5-2 3-3 1.500 1.500-3 3z' /></Line> },
  { el: <Paperclip size={16} strokeWidth={1.3} /> },
  { blue: true, on: 'blue', el: <Filter size={17} strokeWidth={1.2} /> },
  { el: <Trash2 size={16} strokeWidth={1.2} /> },
]

const Candle = ({ c }) => {
  const color = c.up ? GREEN : RED
  const wx = c.x + 0.5
  if (!c.up) {
    return (
      <g>
        <line x1={wx} x2={wx} y1={c.wt} y2={c.wb} stroke={color} />
        <rect x={c.x - 2} y={c.bt} width='5' height={Math.max(c.bb - c.bt, 1.5)} fill={color} />
      </g>
    )
  }
  return (
    <g>
      <line x1={wx} x2={wx} y1={c.wt} y2={c.bt} stroke={color} />
      <line x1={wx} x2={wx} y1={c.bb} y2={c.wb} stroke={color} />
      <rect x={c.x - 1.5} y={c.bt} width='4' height={Math.max(c.bb - c.bt, 1)} fill='#fff' fillOpacity='.3' stroke={color} />
    </g>
  )
}

const Chart = () => (
  <PlotSvg width='2368' height='1168' viewBox='67 140 2368 1168'>
    {bubbles.map(([cx, cy, buy], i) => (
      <circle key={i} cx={cx} cy={cy} r='40' fill={buy ? '#2bb894' : '#ee4b5a'} opacity='.5' />
    ))}
    {candles.map((c, i) => <Candle key={i} c={c} />)}
    <polyline points={maLine.map(p => p.join(',')).join(' ')} fill='none' stroke='#f27d1c' strokeWidth='1.100' />
    <rect x='1395' y='727' width='409' height='410' fill='rgb(0,161,172)' fillOpacity='.18' />
    <rect x='822' y='608' width='28' height='17' rx='3' fill='#f00000' />
    <text x='836' y='621' textAnchor='middle' fontSize='12' fill='#fff' fontFamily='"Noto Sans CJK SC", sans-serif'>垂阴</text>
    <path d='M437 196h-6m2.500-2.500L431 196l2.500 2.500' fill='none' stroke='#1f2a3a' />
    <text x='443' y='200.500' fontSize='12' fill='#1f2a3a' fontFamily='Roboto, sans-serif'>99963.70</text>
    <text x='1613' y='1109.500' fontSize='12' fill='#3a5568' fontFamily='Roboto, sans-serif'>93009.52</text>
    <path d='M1668 1105h7m-2.500-2.500 2.500 2.500-2.500 2.500' fill='none' stroke='#3a5568' />
  </PlotSvg>
)

const OrderPanel = () => (
  <Panel>
    <PanelHead>
      <PanelTab>主力挂单</PanelTab>
      <PanelTab $active>主力吃单</PanelTab>
      <PanelTools>
        <Line size={17}><path d='M1 6h14l-3-2.500M15 10H1l3 2.500' /></Line>
        <HexGear size={17} />
        <X size={20} strokeWidth={1.6} />
      </PanelTools>
    </PanelHead>
    <SmallLabels><span>买成交</span><span>成交差</span><span>卖成交</span></SmallLabels>
    <Track>
      <TrackGreen />
      <Amount>575.11<small>万美元</small></Amount>
      <Amount $red $bold>-7400.68<small>万美元</small></Amount>
      <Amount>7975.79<small>万美元</small></Amount>
    </Track>
    <StatGrid $top={18} $h={20}>
      <StatLabel $align='flex-start'>买均价<SmallToggle /></StatLabel>
      <StatLabel $align='center'>买笔数</StatLabel>
      <StatLabel $align='center'>卖笔数</StatLabel>
      <StatLabel $align='flex-end'>卖均价<SmallToggle /></StatLabel>
    </StatGrid>
    <StatGrid $top={13} $h={24}>
      <StatValue $align='left'>93693.13</StatValue>
      <StatValue $align='center'>2</StatValue>
      <StatValue $align='center'>27</StatValue>
      <StatValue $align='right' $bold>93829.52</StatValue>
    </StatGrid>
    <PanelFoot>
      <div><span>时间范围</span><span>12/29 09:30 - 12/30 16:30</span></div>
      <div><span>价格范围</span><span>92772.37 - 95909.01</span></div>
    </PanelFoot>
    <Callout>市价抛售7976万美元</Callout>
    <CalloutBox />
  </Panel>
)

export default function App() {
  return (
    <Page>
      <GlobalStyle />
      <TitleBar>
        <Avatar />
        <Brand>AICoin小编</Brand>
        <VipBadge><i><Gem /></i><i>VIP</i></VipBadge>
        <Notice>OKX:  限时福利,  手续费最低低至0%</Notice>
        <TitleRight>
          <SearchBox><Search size={18} strokeWidth={1.5} /><span>Deepcoin BTC/USDT 永续</span><kbd>/</kbd></SearchBox>
          <BellSlot><Bell size={20} strokeWidth={1.6} /></BellSlot>
          <UsdBox>USD</UsdBox>
          <MailWrap>
            <Line size={20} w={2} box={20}><rect x='1' y='2' width='18' height='16' /><path d='M5 7l5 4 5-4' /></Line>
            <MailCount>3</MailCount>
          </MailWrap>
          <TitleSep />
          <Line size={17} w={1.6}><path d='M9 1H1v14h14V8' /><rect x='10' y='1' width='5' height='4' fill='currentColor' /></Line>
          <WinButton $ml={8}><Minus size={16} /></WinButton>
          <WinButton><Line size={14} w={1.6}><rect x='2' y='2' width='12' height='12' /></Line></WinButton>
          <WinButton $mr={6}><X size={18} strokeWidth={1.5} /></WinButton>
        </TitleRight>
      </TitleBar>
      <Body>
        <SideNav>
          <NavItem><NavIconBox><HomeGlobe /></NavIconBox>首页</NavItem>
          <NavItem $active><NavIconBox><BarsIcon /></NavIconBox>行情</NavItem>
          <NavItem><NavIconBox><NewsIcon /></NavIconBox>快讯</NavItem>
          <NavItem><NavIconBox><RobotIcon /></NavIconBox>策略</NavItem>
          <NavItem><NavIconBox><Web3Icon /></NavIconBox>Web3</NavItem>
          <NavItem><NavIconBox><WalletIcon /></NavIconBox>资产</NavItem>
          <NavItem><NavBadge>79</NavBadge><NavIconBox><ChatIcon /></NavIconBox>群聊</NavItem>
          <NavItem $gap={8}><NavIconBox><MoreIcon /></NavIconBox>更多</NavItem>
          <NavBottom>
            <PhoneIcon />
            <div><VipDiamond />VIP</div>
          </NavBottom>
        </SideNav>
        <MainCol>
          <TabRow>
            <Tab $active>
              <BinanceMark />
              <TabText>
                <TabName $active>BTC/USDT</TabName>
                <TabPrice $tone='up'><span>93835.01</span><span>0.1%</span></TabPrice>
              </TabText>
            </Tab>
            <Tab $first>
              <TabText>
                <TabName><RingMark />BTC/USD</TabName>
                <TabPrice $tone='down'><span>93635.47</span><span>0.08%</span></TabPrice>
              </TabText>
            </Tab>
            <Tab>
              <TabText>
                <TabName><PerpMark />BTC/USDT永续</TabName>
                <TabPrice $tone='down'><span>93799.9</span><span>0.11%</span></TabPrice>
              </TabText>
            </Tab>
            <Tab>
              <ShareLabel><ShareMark />市占率</ShareLabel>
            </Tab>
            <Tab>
              <TabText>
                <TabName><OkMark />ETH/BTC</TabName>
                <TabPrice><span>0.03651</span><span>1.98%</span></TabPrice>
              </TabText>
            </Tab>
            <AddCell><Plus size={17} strokeWidth={1.2} /></AddCell>
          </TabRow>
          <BarOne>
            <ToolLabel $right={14}><Line size={13} w={1.1}><rect x='1' y='1.500' width='14' height='13' /><path d='M4 10l3-3 2 1.500L12 6' /></Line>指标</ToolLabel>
            <ToolLabel $right={16}><Line size={13} w={1.1}><rect x='1.500' y='3.500' width='13' height='11' /><path d='M4 3.500V1h8v2.500M1.500 8h13' /></Line>高级</ToolLabel>
            <ToolLabel $right={16}><Line size={13} w={1.1}><rect x='2' y='1.500' width='5' height='13' /><rect x='10' y='1.500' width='4.500' height='13' /></Line>多窗</ToolLabel>
            <ToolLabel $right={13}><Line size={13} w={1.1}><path d='M7 2 2 8l5 6V2zM14 2 9.500 8l4.500 6' /></Line>复盘</ToolLabel>
            <ToolLabel $right={10} $gap={3}><Line size={14} w={1.2}><path d='M3 4v8M8 2v12M13 4v8M1.500 6h3v4h-3zM6.500 5h3v6h-3zM11.500 6h3v4h-3z' /></Line><ChevronDown size={11} /></ToolLabel>
            <ToolLabel $right={10} $gap={2}>周期<ChevronDown size={11} /></ToolLabel>
            {periods.map(p => <Period key={p} $active={p === '30分'}>{p}</Period>)}
            <BarRight>
              <OneS>1s</OneS>
              <TickIcon><Camera size={15} strokeWidth={1.2} /></TickIcon>
              <TickIcon $blue><Line size={15}><path d='M2 13l1-3.500 7-7 2.500 2.500-7 7zM9 14h5' /></Line></TickIcon>
              <TickIcon><Line size={15}><path d='M6 2h8v12h-3M1.500 6V2H3M6 11H2M4 9v4' /></Line></TickIcon>
              <TickIcon><Line size={15}><rect x='2' y='2' width='11' height='12' /><path d='M5 5h5M5 8h4M5 11h2' /><circle cx='12' cy='12' r='2.500' fill='currentColor' /></Line></TickIcon>
              <TickIcon><HexGear size={15} /></TickIcon>
              <TickIcon><Line size={14}><path d='M2 2l3 3M5 2v3H2M14 2l-3 3M11 2v3h3M2 14l3-3M5 14v-3H2M14 14l-3-3M11 14v-3h3' /></Line></TickIcon>
              <BarDivider />
              <LayoutLabel><Cloud size={16} strokeWidth={1.1} />默认布局<ChevronDown size={12} strokeWidth={1.3} /></LayoutLabel>
              <KButton>K线分析</KButton>
              <TickIcon $blue $w={16}><Share2 size={15} strokeWidth={1.3} /></TickIcon>
            </BarRight>
          </BarOne>
          <BarTwo>
            {drawTools.map((el, i) => <DrawCell key={i}>{el}</DrawCell>)}
            <DrawSep />
            <DrawCell $text>主</DrawCell>
            <DrawCell $text $on='gold'>大</DrawCell>
            <DrawCell $text>筹</DrawCell>
            {drawToolsB.map((el, i) => <DrawCell key={i}>{el}</DrawCell>)}
            <DrawSep />
            {drawToolsC.map((t, i) => <DrawCell key={i} $blue={t.blue} $on={t.on}>{t.el}</DrawCell>)}
          </BarTwo>
          <ChartRow>
            <Plot>
              <Chart />
              <OhlcLine>
                <RoundMark width='15' height='15' viewBox='0 0 16 16' fill='none' stroke='currentColor'><circle cx='8' cy='8' r='7' /><path d='M5 7l3 3 3-3' /></RoundMark>
                <OhlcDate>2024-12-30 14:30</OhlcDate>
                <span>开</span><b>93886.19</b>
                <span>高</span><b>93949.75</b>
                <span>低</span><b>93733.69</b>
                <span>收</span><b>93835.01</b>
                <span>涨幅</span><b>-0.05%(-51.18)</b>
                <span>振幅</span><b>0.23%</b>
              </OhlcLine>
              <SecondMark width='15' height='15' viewBox='0 0 16 16' fill='none' stroke='currentColor'><circle cx='8' cy='8' r='7' /><path d='M7 5l3 3-3 3' /></SecondMark>
              <OrderPanel />
            </Plot>
            <PriceAxis>
              {priceTicks.map(t => <PriceTick key={t}>{t}</PriceTick>)}
              <PriceTag $top={848}>93835.01</PriceTag>
              <PriceTag $top={869}>04:22</PriceTag>
            </PriceAxis>
          </ChartRow>
          <TimeAxis>
            {timeTicks.map((t, i) => <TimeTick key={i} $date={t.includes('月')}>{t}</TimeTick>)}
            <AxisLinks><span>筹</span><span>爆</span></AxisLinks>
          </TimeAxis>
        </MainCol>
        <RightRail>
          <RailItem $active><Line size={20} w={1.8} box={20} color='#2b3a55'><rect x='2' y='2' width='4' height='6' rx='1' /><rect x='2' y='12' width='4' height='6' rx='1' /><path d='M10 3h8M10 7h8M10 13h8M10 17h8' /></Line></RailItem>
          <RailItem><Line size={20} w={1.6} box={20}><rect x='3' y='1.500' width='14' height='17' rx='1' /><path d='M6.500 6h7M6.500 10h7M6.500 14h4' /></Line></RailItem>
          <RailItem><Line size={20} w={1.6} box={20}><path d='M6 12V2h12v17H7' /><path d='M3 12v5c0 1 1 2 3 2' /><path d='M14 7c-2-1.500-4 0-2 1.500s0 3-2 1.500M12 5v6.500' /></Line></RailItem>
          <RailItem><Line size={20} w={1.5} box={20}><path d='M3 18v-5M8 18v-8M13 18V7M18 18V4M3 9l5-3 4 1 5-5' /></Line></RailItem>
          <RailItem><Line size={20} w={1.5} box={20}><rect x='2' y='3' width='16' height='14' /><path d='M6 13v-3M10 13V7M14 13v-2' /></Line></RailItem>
          <RailItem><Line size={20} w={1.5} box={20}><rect x='2' y='4' width='16' height='13' rx='1' /><path d='M2 8h16M6 12h8M5 4l1-2h8l1 2' /></Line></RailItem>
          <RailOrder>
            <Line size={18} w={1.4} box={20}><circle cx='10' cy='10' r='8' /><path d='M7 12l3-3 3 1' /></Line>
            <span>下单</span>
          </RailOrder>
          <RailBottom>
            <Line size={18} w={1.6} box={18}><rect x='1' y='1' width='16' height='16' rx='1' /><path d='M1 6h16M6 6v11' /></Line>
            <Line size={18} w={1.8} box={18}><path d='M3 11V8a6 6 0 0 1 12 0v3M9 17c3 0 5-1 6-3' /><rect x='1' y='10' width='2.500' height='4' fill='currentColor' /><rect x='14.500' y='10' width='2.500' height='4' fill='currentColor' /></Line>
            <RoboHead />
          </RailBottom>
        </RightRail>
      </Body>
    </Page>
  )
}
